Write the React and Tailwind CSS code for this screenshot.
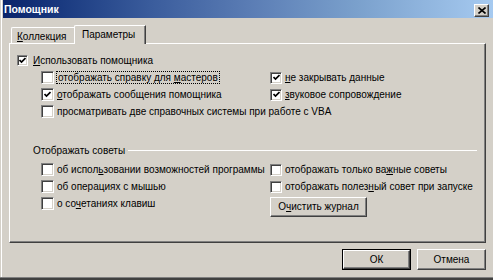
import React from "react";

const SIZES = {
  11: "w-[11px] h-[11px]",
  12: "w-[12px] h-[12px]",
  13: "w-[13px] h-[13px]",
};

function Check({ checked, size = 13 }) {
  return (
    <div
      className={
        "shrink-0 bg-white border border-t-[#808080] border-l-[#808080] border-r-white border-b-white shadow-[inset_1px_1px_0_#404040,inset_-1px_-1px_0_#d4d0c8] flex items-center justify-center " +
        SIZES[size]
      }
    >
      {checked && (
        <svg width="7" height="7" viewBox="0 0 7 7" className="block">
          <path d="M0.5 3 L2.5 5 L6.5 1" fill="none" stroke="#000" strokeWidth="1.7" />
        </svg>
      )}
    </div>
  );
}

function U({ children }) {
  return <span className="underline decoration-1 underline-offset-[1px]">{children}</span>;
}

function Row({ checked, size = 13, gap = "gap-[3px]", children, className = "" }) {
  return (
    <div className={"h-[17px] flex items-center " + gap + " " + className}>
      <Check checked={checked} size={size} />
      <span className="whitespace-nowrap leading-[12px]">{children}</span>
    </div>
  );
}

function Btn({ children, className = "" }) {
  return (
    <div
      className={
        "flex items-center justify-center bg-[#d4d0c8] border border-t-white border-l-white border-r-[#404040] border-b-[#404040] shadow-[inset_-1px_-1px_0_#808080] " +
        className
      }
    >
      {children}
    </div>
  );
}

export default function App() {
  return (
    <div className="w-[493px] h-[280px] bg-[#d4d0c8] overflow-hidden flex flex-col text-[10px] text-black font-['Liberation_Sans','DejaVu_Sans',sans-serif]">
      <div className="flex-1 flex flex-col ml-px border-l border-white pl-px">
        {/* title bar */}
        <div className="h-[18px] flex items-start justify-between bg-[linear-gradient(to_right,#0a246a_0%,#1a3a80_12%,#3a5c9c_30%,#5a7cb4_50%,#7aa0cc_72%,#a6caf0_100%)]">
          <span className="ml-px mt-[2px] text-[10.5px] font-bold text-white leading-[14px]">Помощник</span>
          <div className="mt-[4px] mr-[4px] w-[15px] h-[13px] flex items-center justify-center bg-[#d4d0c8] border border-t-white border-l-white border-r-[#404040] border-b-[#404040] shadow-[inset_-1px_-1px_0_#808080]">
            <svg width="8" height="7" viewBox="0 0 8 7" className="block">
              <path d="M0.5 0.5 L7.5 6.5 M7.5 0.5 L0.5 6.5" stroke="#000" strokeWidth="1.6" fill="none" />
            </svg>
          </div>
        </div>

        {/* tabs */}
        <div className="mt-[7px] ml-[6px] h-[18px] flex items-end">
          <div className="ml-[2px] w-[65px] h-[16px] border-l border-t border-white border-r border-r-[#404040] shadow-[inset_-1px_0_0_#808080] rounded-tl-[2px] pl-[5px] pt-[3px] leading-[12px]">
            <U>К</U>оллекция
          </div>
          <div className="-ml-[2px] -mb-px relative z-10 w-[72px] h-[19px] bg-[#d4d0c8] border-l border-t border-white border-r border-r-[#404040] shadow-[inset_-1px_0_0_#808080] rounded-tl-[2px] pl-[7px] pt-[3px] leading-[12px]">
            Параметры
          </div>
        </div>

        {/* panel */}
        <div className="ml-[6px] w-[477px] h-[200px] border-l border-t border-white border-r border-b border-r-[#404040] border-b-[#404040] shadow-[inset_-1px_-1px_0_#808080]">
          <div className="pt-[8px] pl-[7px] flex flex-col">
            <Row checked size={11} gap="gap-[5px]">
              <U>И</U>спользовать помощника
            </Row>
            <div className="ml-[24px] grid grid-cols-[229px_1fr]">
              <div className="h-[17px] flex items-center gap-[2px]">
                <Check size={13} />
                <span className="whitespace-nowrap leading-[11px] border border-dotted border-black px-px">
                  отображать справку для <U>м</U>астеров
                </span>
              </div>
              <Row checked size={12}>
                <U>н</U>е закрывать данные
              </Row>
              <Row checked size={13}>
                <U>о</U>тображать сообщения помощника
              </Row>
              <Row checked size={12}>
                <U>з</U>вуковое сопровождение
              </Row>
            </div>
            <Row size={13} className="ml-[24px]">
              просматривать две справочных системы при работе с VBA
            </Row>

            <div className="mt-[22px] h-[17px] flex items-center">
              <span className="ml-[16px] whitespace-nowrap leading-[12px]">Отображать советы</span>
              <div className="flex-1 ml-[3px] mr-[8px] h-px bg-white" />
            </div>
            <div className="mt-[2px] ml-[24px] grid grid-cols-[229px_1fr]">
              <Row size={13}>
                об испол<U>ь</U>зовании возможностей программы
              </Row>
              <Row size={12}>
                отображать только ва<U>ж</U>ные советы
              </Row>
              <Row size={13}>
                об операциях с мышью
              </Row>
              <Row size={12}>
                отображать полез<U>н</U>ый совет при запуске
              </Row>
              <Row size={13}>
                о со<U>ч</U>етаниях клавиш
              </Row>
              <div className="pt-[2px]">
                <Btn className="w-[97px] h-[20px]">
                  <span className="leading-[12px]">
                    О<U>ч</U>истить журнал
                  </span>
                </Btn>
              </div>
            </div>
          </div>
        </div>

        {/* buttons */}
        <div className="mt-[6px] mr-[7px] flex justify-end gap-[6px]">
          <div className="w-[69px] h-[21px] border border-black flex">
            <Btn className="flex-1">ОК</Btn>
          </div>
          <Btn className="w-[69px] h-[21px]">Отмена</Btn>
        </div>
      </div>
      <div className="h-[3px] border-t border-[#808080] bg-[#404040]" />
    </div>
  );
}
